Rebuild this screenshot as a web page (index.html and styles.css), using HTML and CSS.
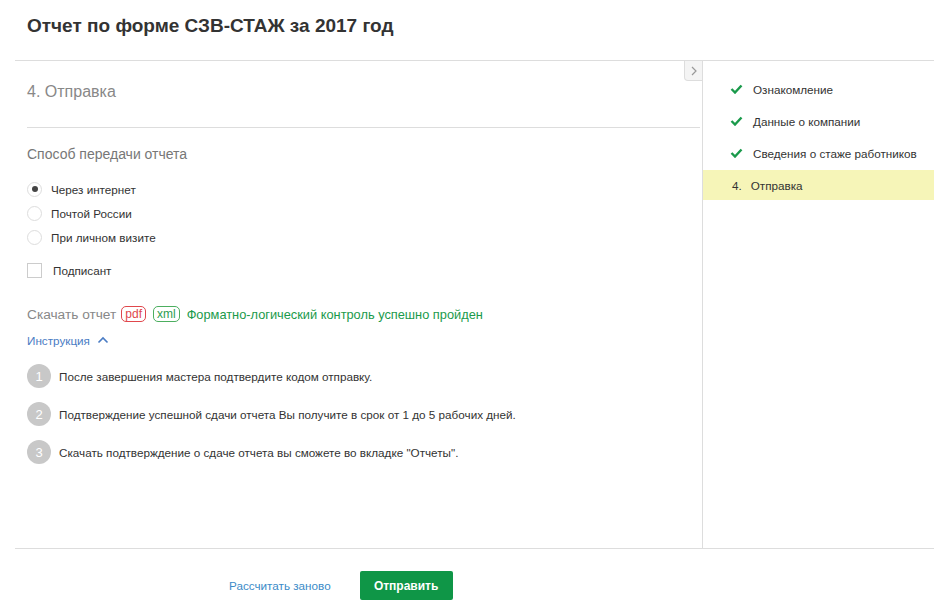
FILE: index.html
```html
<!DOCTYPE html>
<html lang="ru">
<head>
    <meta charset="UTF-8">
    <meta name="viewport" content="width=device-width, initial-scale=1.0">
    <title>Отчет по форме СЗВ-СТАЖ за 2017 год</title>
    <link rel="stylesheet" href="styles.css">
</head>
<body>
    <h1 class="page-title">Отчет по форме СЗВ-СТАЖ за 2017 год</h1>

    <div class="wizard">
        <div class="wizard-main">
            <button class="collapse-btn" type="button">
                <svg width="8" height="10" viewBox="0 0 8 10"><path d="M2 1l4 4-4 4" fill="none" stroke="#999" stroke-width="1.2"/></svg>
            </button>

            <div class="step-title">4. Отправка</div>

            <div class="section-label">Способ передачи отчета</div>

            <div class="radio-group">
                <label class="radio checked"><span class="radio-mark"></span>Через интернет</label>
                <label class="radio"><span class="radio-mark"></span>Почтой России</label>
                <label class="radio"><span class="radio-mark"></span>При личном визите</label>
            </div>

            <label class="checkbox"><span class="checkbox-mark"></span>Подписант</label>

            <div class="download">
                <span class="download-label">Скачать отчет</span>
                <span class="badge badge-pdf">pdf</span>
                <span class="badge badge-xml">xml</span>
                <span class="download-status">Форматно-логический контроль успешно пройден</span>
            </div>

            <div class="instruction-toggle">
                Инструкция
                <svg width="12" height="8" viewBox="0 0 12 8"><path d="M1.5 6.5l4.5-4.5 4.5 4.5" fill="none" stroke="#4a7cc4" stroke-width="1.6"/></svg>
            </div>

            <ol class="instruction">
                <li><span class="num">1</span>После завершения мастера подтвердите кодом отправку.</li>
                <li><span class="num">2</span>Подтверждение успешной сдачи отчета Вы получите в срок от 1 до 5 рабочих дней.</li>
                <li><span class="num">3</span>Скачать подтверждение о сдаче отчета вы сможете во вкладке "Отчеты".</li>
            </ol>
        </div>

        <ul class="wizard-steps">
            <li class="done"><svg class="check" width="13" height="10" viewBox="0 0 13 10"><path d="M1.5 5l3.5 3.5 6.5-7" fill="none" stroke="#1a9a4b" stroke-width="2.4"/></svg>Ознакомление</li>
            <li class="done"><svg class="check" width="13" height="10" viewBox="0 0 13 10"><path d="M1.5 5l3.5 3.5 6.5-7" fill="none" stroke="#1a9a4b" stroke-width="2.4"/></svg>Данные о компании</li>
            <li class="done"><svg class="check" width="13" height="10" viewBox="0 0 13 10"><path d="M1.5 5l3.5 3.5 6.5-7" fill="none" stroke="#1a9a4b" stroke-width="2.4"/></svg>Сведения о стаже работников</li>
            <li class="current"><span class="step-num">4.</span>Отправка</li>
        </ul>
    </div>

    <div class="wizard-footer">
        <a class="link-recalc" href="#">Рассчитать заново</a>
        <button class="btn-send" type="button">Отправить</button>
    </div>
</body>
</html>
```

FILE: styles.css
```css
body {
    font-family: "Liberation Sans", Arial, sans-serif;
    margin: 0;
    padding: 0;
    background-color: #fff;
    color: #333;
}
.page-title {
    margin: 0;
    height: 60px;
    padding: 0 27px;
    line-height: 52px;
    font-size: 19px;
    font-weight: bold;
    color: #333;
    box-sizing: border-box;
}
.wizard {
    display: flex;
    margin: 0 2px 0 15px;
    height: 489px;
    border-top: 1px solid #ddd;
    border-bottom: 1px solid #ddd;
    box-sizing: border-box;
}
.wizard-main {
    position: relative;
    flex: 1;
    padding-left: 12px;
    border-right: 1px solid #ddd;
}
.collapse-btn {
    position: absolute;
    top: 0;
    right: -1px;
    width: 19px;
    height: 20px;
    padding: 0;
    border: 1px solid #ddd;
    border-top: none;
    border-radius: 0 0 0 4px;
    background: #f4f4f4;
    display: flex;
    align-items: center;
    justify-content: center;
}
.step-title {
    height: 66px;
    line-height: 62px;
    margin-right: 2px;
    font-size: 16px;
    color: #888;
    border-bottom: 1px solid #ddd;
}
.section-label {
    margin-top: 16px;
    font-size: 14px;
    line-height: 20px;
    color: #777;
}
.radio-group {
    margin-top: 13px;
}
.radio, .checkbox {
    display: flex;
    align-items: center;
    height: 24px;
    font-size: 11.7px;
    color: #333;
}
.radio-mark {
    width: 13px;
    height: 13px;
    margin-right: 9px;
    border: 1px solid #ddd;
    border-radius: 50%;
    display: flex;
    align-items: center;
    justify-content: center;
}
.radio.checked .radio-mark::after {
    content: "";
    width: 6px;
    height: 6px;
    border-radius: 50%;
    background: #444;
}
.checkbox {
    margin-top: 9px;
}
.checkbox-mark {
    width: 13px;
    height: 13px;
    margin-right: 11px;
    border: 1px solid #ccc;
}
.download {
    display: flex;
    align-items: center;
    margin-top: 22px;
    height: 20px;
}
.download-label {
    font-size: 13.7px;
    color: #888;
    margin-right: 5px;
}
.badge {
    font-size: 12px;
    line-height: 14px;
    padding: 0 3px;
    border-radius: 5px;
    margin-right: 7px;
}
.badge-pdf {
    color: #e0474c;
    border: 1px solid #e0474c;
}
.badge-xml {
    color: #2c9d4f;
    border: 1px solid #4cae5f;
}
.download-status {
    font-size: 12.8px;
    color: #1a9a4b;
}
.instruction-toggle {
    display: flex;
    align-items: center;
    gap: 7px;
    margin-top: 6px;
    height: 20px;
    font-size: 11.7px;
    color: #4a7cc4;
}
.instruction {
    list-style: none;
    margin: 14px 0 0;
    padding: 0;
}
.instruction li {
    display: flex;
    align-items: center;
    height: 24px;
    margin-bottom: 14px;
    font-size: 11.7px;
    color: #333;
}
.instruction .num {
    width: 24px;
    height: 24px;
    margin-right: 8px;
    border-radius: 50%;
    background: #c8c8c8;
    color: #fff;
    font-size: 13px;
    display: flex;
    align-items: center;
    justify-content: center;
}
.wizard-steps {
    width: 231px;
    list-style: none;
    margin: 0;
    padding: 12px 0 0;
}
.wizard-steps li {
    display: flex;
    align-items: center;
    height: 32px;
    padding-left: 27px;
    font-size: 11.7px;
    color: #333;
}
.wizard-steps .check {
    margin-right: 10px;
}
.wizard-steps li.current {
    height: 30px;
    margin-top: 1px;
    padding-left: 29px;
    background: #f6f5b8;
}
.step-num {
    margin-right: 9px;
}
.wizard-footer {
    display: flex;
    align-items: center;
    padding: 22px 0 0 229px;
}
.link-recalc {
    font-size: 11.7px;
    color: #3b8bc8;
    text-decoration: none;
    margin-right: 29px;
}
.btn-send {
    width: 93px;
    height: 29px;
    border: none;
    border-radius: 2px;
    background: #0f9647;
    color: #fff;
    font-family: inherit;
    font-size: 12px;
    font-weight: bold;
}
```
